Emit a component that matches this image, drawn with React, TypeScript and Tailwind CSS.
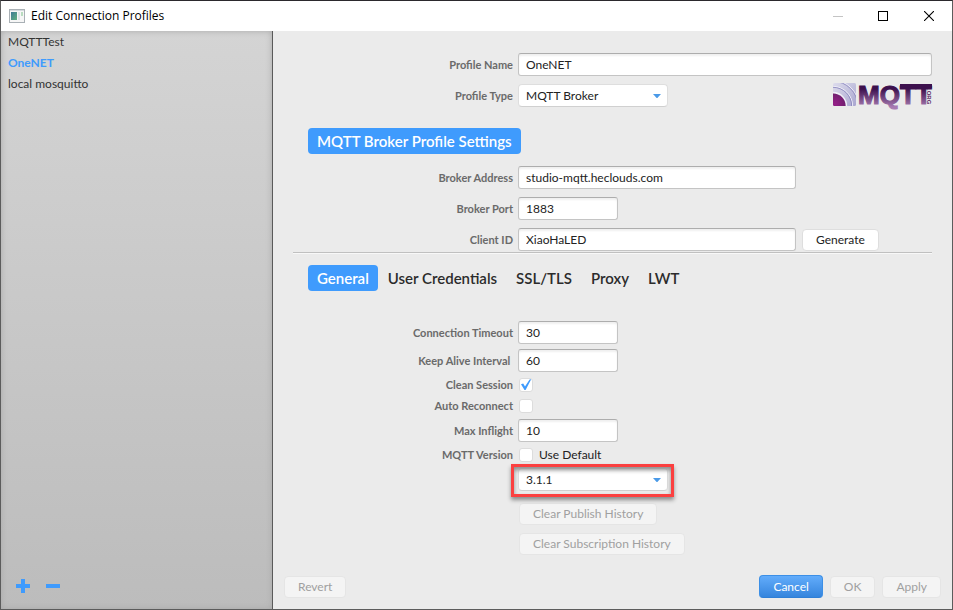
import { useState } from 'react';
import type { InputHTMLAttributes, ReactNode, SelectHTMLAttributes } from 'react';
import clsx from 'clsx';

const PROFILES = ['MQTTTest', 'OneNET', 'local mosquitto'];
const TABS = ['General', 'User Credentials', 'SSL/TLS', 'Proxy', 'LWT'];

function Row({ label, htmlFor, children }: { label: string; htmlFor: string; children: ReactNode }) {
  return (
    <div className="grid grid-cols-[240px_1fr] items-center gap-x-[5px]">
      <label htmlFor={htmlFor} className="text-right text-[11px] leading-[14px] font-bold whitespace-pre text-[#6a6a6a]">
        {label}
      </label>
      <div className="flex items-center">{children}</div>
    </div>
  );
}

function TextField({ className, ...rest }: InputHTMLAttributes<HTMLInputElement>) {
  return (
    <input
      type="text"
      className={clsx(
        'h-[23px] rounded-[3px] border border-[#c4c4c4] border-t-[#adadad] bg-white px-[7px] text-[12px] text-[#222] shadow-[inset_0_2px_2px_#f0f0f0] outline-none',
        className,
      )}
      {...rest}
    />
  );
}

function SelectField({ children, ...rest }: SelectHTMLAttributes<HTMLSelectElement>) {
  return (
    <div className="relative w-[150px]">
      <select
        className="block h-[23px] w-full appearance-none rounded-[4px] border border-[#dedede] border-b-[#d0d0d0] bg-white px-[7px] text-[12px] text-[#222] outline-none"
        {...rest}
      >
        {children}
      </select>
      <svg viewBox="0 0 8 4" className="pointer-events-none absolute top-[10px] right-[7px] h-1 w-2" fill="#4a9ae8">
        <path d="M0 0h8L4.6 3.7a.9.9 0 0 1-1.2 0z" />
      </svg>
    </div>
  );
}

function CheckBox({ id, defaultChecked }: { id: string; defaultChecked?: boolean }) {
  return (
    <span className="relative ml-px block h-[14px] w-[14px]">
      <input
        id={id}
        type="checkbox"
        defaultChecked={defaultChecked}
        className="peer block h-[14px] w-[14px] appearance-none rounded-[3px] border border-[#dcdcdc] bg-white"
      />
      <svg
        viewBox="0 0 14 14"
        className="pointer-events-none absolute inset-0 hidden h-[14px] w-[14px] peer-checked:block"
        fill="#3f9bfd"
      >
        <path d="M2 6.3 4.2 5.4 6 8.6 10.6 1.6 12.2 1.2 6.6 12H5.5z" />
      </svg>
    </span>
  );
}

function PushButton({ children, disabled, className }: { children: ReactNode; disabled?: boolean; className?: string }) {
  return (
    <button
      type="button"
      disabled={disabled}
      className={clsx(
        'h-[22px] rounded-[4px] border px-[13px] text-[12px] leading-[20px]',
        disabled ? 'border-[#e5e5e5] bg-[#f4f4f4] text-[#a0a0a0]' : 'border-[#dedede] bg-white text-[#222]',
        className,
      )}
    >
      {children}
    </button>
  );
}

function MqttLogo() {
  return (
    <svg viewBox="0 0 99 25" className="h-[25px] w-[99px] overflow-visible" role="img" aria-label="MQTT.ORG">
      <defs>
        <linearGradient id="word" gradientUnits="userSpaceOnUse" x1="0" y1="0" x2="0" y2="24">
          <stop offset="0.25" stopColor="#3c104d" />
          <stop offset="1" stopColor="#a77bb2" />
        </linearGradient>
        <linearGradient id="tile" x1="0" y1="0" x2="1" y2="1">
          <stop offset="0" stopColor="#dddcec" />
          <stop offset="1" stopColor="#a9a6d0" />
        </linearGradient>
        <radialGradient id="core" gradientUnits="userSpaceOnUse" cx="2" cy="21" r="12">
          <stop offset="0" stopColor="#951f88" />
          <stop offset="1" stopColor="#6d1f6b" />
        </radialGradient>
        <clipPath id="tileClip">
          <rect width="23" height="23" rx="1.5" />
        </clipPath>
      </defs>
      <g clipPath="url(#tileClip)">
        <rect width="23" height="23" fill="url(#tile)" />
        <g fill="none" stroke="#f0eff8">
          <circle cx="0" cy="23" r="13.4" strokeWidth="1.6" />
          <circle cx="0" cy="23" r="19.6" />
          <circle cx="0" cy="23" r="25.6" />
        </g>
        <g fill="none" stroke="#8582bb" strokeWidth="0.8">
          <circle cx="0" cy="23" r="18.7" />
          <circle cx="0" cy="23" r="24.7" />
        </g>
        <circle cx="0" cy="23" r="12.6" fill="url(#core)" />
      </g>
      <text
        x="25"
        y="21"
        fill="url(#word)"
        stroke="url(#word)"
        strokeWidth="1.2"
        fontFamily="Liberation Sans, sans-serif"
        fontWeight="700"
        fontSize="26"
      >
        MQTT
      </text>
      <rect x="67" y="1" width="32" height="4" fill="#3c104d" />
      <text transform="translate(94 6) rotate(90)" fill="#54245f" fontFamily="Liberation Sans, sans-serif" fontWeight="700" fontSize="6">
        .ORG
      </text>
    </svg>
  );
}

function TitleBar() {
  return (
    <header className="flex h-[30px] items-center bg-white pl-2">
      <svg viewBox="0 0 16 14" className="h-[14px] w-4">
        <defs>
          <linearGradient id="pane" x1="0" y1="0" x2="1" y2="1">
            <stop offset="0" stopColor="#3e7a96" />
            <stop offset="1" stopColor="#62b07f" />
          </linearGradient>
        </defs>
        <rect x="0.5" y="0.5" width="15" height="13" fill="#f6f6f6" stroke="#a9b0b5" />
        <path d="M1 1.5h14" stroke="#d5dade" />
        <rect x="2" y="3" width="6" height="8" fill="url(#pane)" />
        <rect x="9" y="3" width="2" height="8" fill="#dfe5e8" />
        <rect x="12" y="3" width="2" height="4" fill="#b9dcc0" />
      </svg>
      <h1 className="ml-[6px] flex-1 font-['Open_Sans',sans-serif] text-[12px] text-black">Edit Connection Profiles</h1>
      <button type="button" aria-label="Minimize" className="flex w-[45px] justify-center">
        <svg viewBox="0 0 10 10" className="h-[10px] w-[10px]" stroke="#c4c4c4" shapeRendering="crispEdges">
          <path d="M0 5.5h10" />
        </svg>
      </button>
      <button type="button" aria-label="Maximize" className="flex w-[46px] justify-center">
        <svg viewBox="0 0 10 10" className="h-[10px] w-[10px]" stroke="#000" fill="none" shapeRendering="crispEdges">
          <rect x="0.5" y="0.5" width="9" height="9" />
        </svg>
      </button>
      <button type="button" aria-label="Close" className="flex w-[46px] justify-center">
        <svg viewBox="0 0 10 10" className="h-[10px] w-[10px]" stroke="#000" strokeWidth="1.1">
          <path d="M0 0l10 10M10 0L0 10" />
        </svg>
      </button>
    </header>
  );
}

function Sidebar({ selected, onSelect }: { selected: string; onSelect: (name: string) => void }) {
  return (
    <aside className="flex w-[272px] shrink-0 flex-col justify-between border-r border-[#5a5a5a] bg-linear-to-b from-[#d4d4d4] to-[#bcbcbc] shadow-[inset_0_0_6px_#a8a8a8]">
      <ul>
        {PROFILES.map((name) => (
          <li key={name}>
            <button
              type="button"
              onClick={() => onSelect(name)}
              className={clsx(
                'block h-[21px] w-full px-[7px] text-left text-[12px]',
                name === selected ? 'font-bold text-[#3f9bfd]' : 'text-[#333]',
              )}
            >
              {name}
            </button>
          </li>
        ))}
      </ul>
      <div className="flex gap-4 px-[15px] pb-4">
        <button type="button" aria-label="Add profile">
          <svg viewBox="0 0 14 14" className="h-[14px] w-[14px]" fill="#3f9bfd">
            <path d="M5 0h4v5h5v4H9v5H5V9H0V5h5z" />
          </svg>
        </button>
        <button type="button" aria-label="Remove profile">
          <svg viewBox="0 0 14 14" className="h-[14px] w-[14px]" fill="#3f9bfd">
            <path d="M0 5h14v4H0z" />
          </svg>
        </button>
      </div>
    </aside>
  );
}

export default function App() {
  const [selected, setSelected] = useState('OneNET');
  const [tab, setTab] = useState('General');

  return (
    <div className="flex min-h-screen flex-col border border-[#5c5c5c] border-t-[#2b292d] font-['Lato',sans-serif]">
      <TitleBar />
      <div className="flex flex-1">
        <Sidebar selected={selected} onSelect={setSelected} />

        <main className="flex min-w-0 flex-1 flex-col bg-[#ebebeb]">
          <section className="flex flex-col gap-2 pt-[22px] pr-5">
            <Row label="Profile Name" htmlFor="name">
              <TextField id="name" defaultValue="OneNET" className="w-full" />
            </Row>
            <div className="relative">
              <Row label="Profile Type" htmlFor="type">
                <SelectField id="type">
                  <option>MQTT Broker</option>
                </SelectField>
              </Row>
              <div className="absolute top-[-1px] right-0">
                <MqttLogo />
              </div>
            </div>
          </section>

          <h2 className="mt-[21px] ml-[35px] h-[26px] self-start rounded-[4px] bg-[#3f9bfd] px-[9px] text-[15px] leading-[26px] font-semibold text-white">
            MQTT Broker Profile Settings
          </h2>

          <section className="mt-3 flex flex-col gap-2 pr-5">
            <Row label="Broker Address" htmlFor="address">
              <TextField id="address" defaultValue="studio-mqtt.heclouds.com" className="w-[278px]" />
            </Row>
            <Row label="Broker Port" htmlFor="port">
              <TextField id="port" defaultValue="1883" className="w-[100px]" />
            </Row>
            <Row label="Client ID" htmlFor="client">
              <TextField id="client" defaultValue="XiaoHaLED" className="w-[278px]" />
              <PushButton className="ml-[6px]">Generate</PushButton>
            </Row>
          </section>

          <hr className="mt-px mr-5 ml-5 h-[2px] border-t border-b border-t-[#c0c0c0] border-b-[#f8f8f8]" />

          <nav className="mt-[11px] ml-[35px] flex gap-px">
            {TABS.map((t) => (
              <button
                key={t}
                type="button"
                onClick={() => setTab(t)}
                className={clsx(
                  'h-[26px] rounded-[4px] px-[9px] text-[15px] leading-[26px] font-semibold',
                  t === tab ? 'bg-[#3f9bfd] text-white' : 'text-[#2b2b2b]',
                )}
              >
                {t}
              </button>
            ))}
          </nav>

          <section className="mt-[30px] flex flex-col gap-[6px] pr-5">
            <div className="flex flex-col gap-[5px]">
              <Row label="Connection Timeout" htmlFor="timeout">
                <TextField id="timeout" defaultValue="30" className="w-[100px]" />
              </Row>
              <Row label="Keep Alive Interval " htmlFor="keepalive">
                <TextField id="keepalive" defaultValue="60" className="w-[100px]" />
              </Row>
            </div>
            <div className="flex flex-col gap-[7px]">
              <Row label="Clean Session" htmlFor="clean">
                <CheckBox id="clean" defaultChecked />
              </Row>
              <Row label="Auto Reconnect" htmlFor="reconnect">
                <CheckBox id="reconnect" />
              </Row>
            </div>
            <Row label="Max Inflight" htmlFor="inflight">
              <TextField id="inflight" defaultValue="10" className="w-[100px]" />
            </Row>
            <Row label="MQTT Version" htmlFor="version">
              <CheckBox id="default" />
              <label htmlFor="default" className="ml-[6px] text-[12px] leading-[14px] text-[#222]">
                Use Default
              </label>
            </Row>
            <div className="ml-[245px] flex flex-col items-start">
              <div className="relative">
                <SelectField id="version">
                  <option>3.1.1</option>
                </SelectField>
                <div className="pointer-events-none absolute top-[-4px] right-[-6px] bottom-[-6px] left-[-7px] border-3 border-[#fb4040] shadow-[0_3px_4px_#8c8c8c,inset_0_3px_4px_#8c8c8c]" />
              </div>
              <div className="mt-3 ml-px flex flex-col items-start gap-2">
                <PushButton disabled>Clear Publish History</PushButton>
                <PushButton disabled>Clear Subscription History</PushButton>
              </div>
            </div>
          </section>

          <footer className="mt-auto flex items-center justify-between pr-[11px] pb-[11px] pl-[11px]">
            <PushButton disabled>Revert</PushButton>
            <div className="flex items-center gap-[7px]">
              <button
                type="button"
                className="h-[23px] rounded-[4px] border border-[#3c8fe6] border-b-[#2f7fd6] bg-linear-to-b from-[#62acfb] to-[#3585dd] px-[13px] text-[12px] leading-[20px] text-white"
              >
                Cancel
              </button>
              <PushButton disabled>OK</PushButton>
              <PushButton disabled>Apply</PushButton>
            </div>
          </footer>
        </main>
      </div>
    </div>
  );
}
